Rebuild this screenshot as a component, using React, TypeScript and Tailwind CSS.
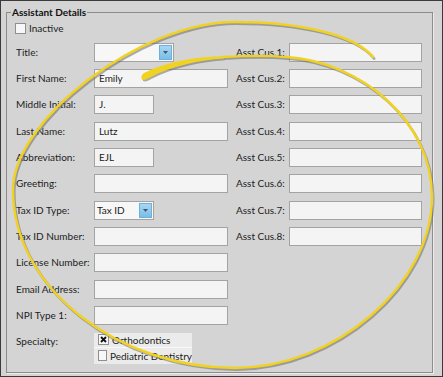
import React from 'react';

const font = { fontFamily: 'Lato, "Noto Sans", Arial, sans-serif' };

// hand-drawn spiral annotation (screen coords)
const spiral = [
  'M 373 57',
  'C 355 35, 300 22, 235 22',
  'C 140 22, 13 120, 13 190',
  'C 13 290, 120 368, 235 368',
  'C 335 368, 432 285, 432 197',
  'C 432 120, 360 62, 287 57',
  'C 265 55, 240 56, 222 57',
].join(' ');
const tip = 'M 224 56.2 C 200 56.5, 170 60, 144 73 Q 140 76 142 79.5 Q 145 81 150 77.5 C 172 66, 200 60, 224 58.6 Z';

function Annotation() {
  return (
    <svg className="absolute left-[-1px] top-[-1px] pointer-events-none" width="443" height="377" viewBox="0 0 443 377">
      <g transform="translate(1.2 1.6)" opacity="0.55">
        <path d={spiral} fill="none" stroke="#6d6d6d" strokeWidth="2.6" strokeLinecap="round" />
        <path d={tip} fill="#6d6d6d" />
      </g>
      <path d={spiral} fill="none" stroke="#f1d221" strokeWidth="2.4" strokeLinecap="round" />
      <path d={tip} fill="#f1d221" />
    </svg>
  );
}

function TextBox({ w, value }: { w: string; value?: string }) {
  return (
    <div className={`${w} h-[19px] border border-[#a3a3a3] bg-[#f4f4f4] pl-[4px] text-[10px] leading-[17px] text-[#1c1c1c]`}>
      {value}
    </div>
  );
}

function Combo({ w, value }: { w: string; value?: string }) {
  return (
    <div className={`${w} h-[19px] flex border border-[#a3a3a3] bg-[#f7f7f7]`}>
      <div className="flex-1 pl-[2px] text-[10px] leading-[17px] text-[#1c1c1c]">{value}</div>
      <div className="w-[13px] m-px flex items-center justify-center bg-gradient-to-b from-[#a9d7f2] to-[#79bde6] border border-[#6fb1db]">
        <svg width="5" height="3" viewBox="0 0 5 3">
          <path d="M0 0 H5 L2.5 3 Z" fill="#355a78" />
        </svg>
      </div>
    </div>
  );
}

function Check({ checked }: { checked?: boolean }) {
  return (
    <div className="w-[11px] h-[11px] border border-[#8f8f8f] bg-[#f7f7f7] flex items-center justify-center">
      {checked && (
        <svg width="7" height="7" viewBox="0 0 7 7">
          <path d="M1 1 L6 6 M6 1 L1 6" stroke="#111" strokeWidth="1.8" />
        </svg>
      )}
    </div>
  );
}

type Row = { label: string; field: React.ReactNode; cus?: number };

const rows: Row[] = [
  { label: 'Title:', field: <Combo w="w-[80px]" />, cus: 1 },
  { label: 'First Name:', field: <TextBox w="w-[134px]" value="Emily" />, cus: 2 },
  { label: 'Middle Initial:', field: <TextBox w="w-[60px]" value="J." />, cus: 3 },
  { label: 'Last Name:', field: <TextBox w="w-[134px]" value="Lutz" />, cus: 4 },
  { label: 'Abbreviation:', field: <TextBox w="w-[60px]" value="EJL" />, cus: 5 },
  { label: 'Greeting:', field: <TextBox w="w-[134px]" />, cus: 6 },
  { label: 'Tax ID Type:', field: <Combo w="w-[60px]" value="Tax ID" />, cus: 7 },
  { label: 'Tax ID Number:', field: <TextBox w="w-[134px]" />, cus: 8 },
  { label: 'License Number:', field: <TextBox w="w-[134px]" /> },
  { label: 'Email Address:', field: <TextBox w="w-[134px]" /> },
  { label: 'NPI Type 1:', field: <TextBox w="w-[134px]" /> },
];

export default function App() {
  return (
    <div
      className="relative w-[443px] h-[377px] border border-[#3a3a3a] bg-[#d4d4d4] pl-[5px] pt-[4px] text-[#1c1c1c] text-[10px]"
      style={font}
    >
      <fieldset className="w-[427px] h-[368px] border border-[#8c8c8c] shadow-[1px_1px_0_#ececec]">
        <legend className="ml-[4px] px-[1px] font-bold text-[10px] leading-[14px] text-[#111]">Assistant Details</legend>

        <div className="flex items-center gap-[3px] pl-[8px] mt-[2px] h-[14px]">
          <Check />
          <span className="leading-[14px]">Inactive</span>
        </div>

        <div className="mt-[4px] pl-[9px]">
          {rows.map((r) => (
            <div key={r.label} className="flex items-center h-[26.33px]">
              <div className="w-[78px] whitespace-nowrap">{r.label}</div>
              <div className="w-[142px]">{r.field}</div>
              {r.cus && (
                <>
                  <div className="w-[53px] whitespace-nowrap">Asst Cus.{r.cus}:</div>
                  <TextBox w="w-[133px]" />
                </>
              )}
            </div>
          ))}

          <div className="flex items-start mt-[4px]">
            <div className="w-[78px] leading-[16px]">Specialty:</div>
            <div className="w-[98px] bg-[#ebebeb] flex flex-col">
              <div className="h-[15px] flex items-center gap-[3px] pl-[4px] border-b border-[#f8f8f8]">
                <Check checked />
                <span className="leading-[14px]">Orthodontics</span>
              </div>
              <div className="h-[16px] flex items-center gap-[3px] pl-[4px]">
                <Check />
                <span className="leading-[14px] whitespace-nowrap">Pediatric Dentistry</span>
              </div>
            </div>
          </div>
        </div>
      </fieldset>
      <Annotation />
    </div>
  );
}
